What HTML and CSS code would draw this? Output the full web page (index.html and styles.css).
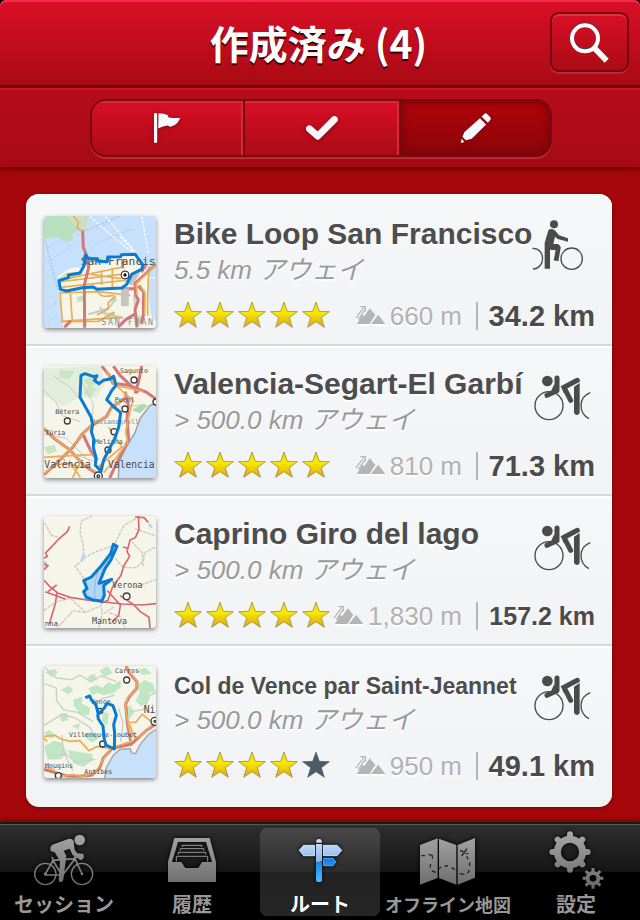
FILE: index.html
```html
<!DOCTYPE html>
<html lang="ja">
<head>
<meta charset="utf-8">
<meta name="viewport" content="width=device-width, initial-scale=1">
<title>作成済み (4)</title>
<link rel="stylesheet" href="styles.css">
</head>
<body>
<svg class="defs" aria-hidden="true">
  <defs>
    <linearGradient id="gold" x1="0" y1="0" x2="0" y2="1"><stop offset="0" stop-color="#eadb00"/><stop offset=".4" stop-color="#f8ea02"/><stop offset="1" stop-color="#dfa512"/></linearGradient>
    <linearGradient id="steel" gradientUnits="userSpaceOnUse" x1="0" y1="50" x2="0" y2="215"><stop offset="0" stop-color="#a9a9a9"/><stop offset="1" stop-color="#6b6b6b"/></linearGradient>
    <linearGradient id="steel-low" gradientUnits="userSpaceOnUse" x1="0" y1="150" x2="0" y2="330"><stop offset="0" stop-color="#a9a9a9"/><stop offset="1" stop-color="#666"/></linearGradient>
    <linearGradient id="sky" x1="0" y1="0" x2="0" y2="1"><stop offset="0" stop-color="#d5e3f8"/><stop offset="1" stop-color="#84b0ec"/></linearGradient>
    <linearGradient id="azure" x1="0" y1="0" x2="0" y2="1"><stop offset="0" stop-color="#1478e8"/><stop offset="1" stop-color="#3fc0fc"/></linearGradient>
    <symbol id="star" viewBox="0 0 84 84"><path d="M42 3 52 31 82 32 58 50 67 79 42 62 17 79 26 50 2 32 32 31Z"/></symbol>
    <symbol id="peaks" viewBox="102 358 94 62">
      <path d="M107 417 123 388 129 393 147 368 160 384 164 389 146 417Z"/>
      <path d="M150 417 173 388 195 417Z"/>
      <path d="M104 399 128 366M111 403 131 374M117 363H133V378" fill="none" stroke="currentColor" stroke-width="4"/>
    </symbol>
    <symbol id="racer" viewBox="636 69 180 168">
      <circle cx="687" cy="182" r="42" fill="none" stroke="currentColor" stroke-width="4"/>
      <path d="M811 143C776 156 773 202 807 221" fill="none" stroke="currentColor" stroke-width="4"/>
      <circle cx="682" cy="108" r="16"/>
      <path d="M711 99V137L681 151" fill="none" stroke="currentColor" stroke-width="15" stroke-linecap="round" stroke-linejoin="round"/>
      <path d="M703 116 694 137 708 140Z"/>
      <path d="M772 106 732 127 752 166" fill="none" stroke="currentColor" stroke-width="15" stroke-linecap="round"/>
      <path d="M724 124 734 120 740 140 731 144Z"/>
      <path d="M762 125 779 114V202Q778 210 770 210 762 209 762 202Z"/>
    </symbol>
  </defs>
</svg>

<header class="topbar">
  <h1 class="topbar-title">作成済み (4)</h1>
  <button class="search" type="button" aria-label="検索">
    <svg viewBox="747 63 123 129" aria-hidden="true"><path d="m823 144 37 38" stroke="#fff" stroke-width="17"/><circle cx="795" cy="112" r="39" fill="none" stroke="#3e3e50" stroke-width="12"/><circle cx="795" cy="115" r="39" fill="none" stroke="#fff" stroke-width="12"/></svg>
  </button>
</header>

<div class="filterbar">
  <div class="segments" role="group">
    <button class="segment" type="button" aria-label="フラグ">
      <svg viewBox="465 342 90 99" aria-hidden="true"><path d="M468 349Q468 345 473 345 478 345 478 349V434Q478 438 473 438 468 438 468 434ZM482 346Q500 346 512 352V358Q530 362 549 360 544 377 529 384 518 391 511 384 496 385 481 393Z"/></svg>
    </button>
    <button class="segment" type="button" aria-label="完了">
      <svg viewBox="0 0 99 81" aria-hidden="true"><path d="m13 43 24 21L85 16" fill="none" stroke="currentColor" stroke-width="20" stroke-linejoin="round" stroke-linecap="round"/></svg>
    </button>
    <button class="segment segment-on" type="button" aria-label="作成済み" aria-pressed="true">
      <svg viewBox="426 343 93 93" aria-hidden="true"><path d="M497 348Q500 345 504 348L514 358Q517 362 514 366L507 374 489 357ZM484 361 502 379 460 421 443 425 433 415 439 401ZM431 421 439 430 428 433Z"/></svg>
    </button>
  </div>
</div>

<main class="content">
  <ul class="routes">
    <li class="route">
      <svg class="map" viewBox="72 93 336 336" role="img" aria-label="Bike Loop San Francisco">
        <path class="water" d="M72 93H408V429H72Z"/>
        <path d="M72 150 130 100M80 190 180 130M72 240 170 170M220 180 340 130M230 130 300 95M72 290 110 260M76 380 110 350M72 420 112 390" stroke="#b5d3f3" stroke-width="3"/>
        <path d="M72 93H203L199 127 184 141 173 128 157 146 158 166 142 172 112 156 72 162Z" fill="#b8dfbe"/>
        <path d="M140 93H200L199 127 181 139Z" fill="#ccdfc4"/>
        <path class="land" d="M115 273 150 250 184 246 197 208 218 226 260 214 348 207 370 245 386 267V330L393 390 408 410V429H130L116 320Z"/>
        <path d="M114 282 137 264 178 260 185 274 140 283ZM214 216 263 217V236H218ZM170 336 191 330 191 349 173 352ZM250 390 280 379 287 399 260 405ZM272 344 290 337V351H275ZM350 392 366 391V411H351Z" fill="#c2e6bd"/>
        <path d="M240 366C248 394 292 350 285 331M205 388 258 373M246 382 310 399M343 330 347 412" fill="none" stroke="#ccc9c2" stroke-width="6"/>
        <path d="M75 165 113 313M190 139 298 93" fill="none" stroke="#9caabc" stroke-width="2" stroke-dasharray="6 4"/>
        <path d="M210 95 286 161 360 220M257 94 351 208M366 94 385 210M300 154 365 224M384 277 408 280" fill="none" stroke="#fff" stroke-width="4" stroke-dasharray="8 5"/>
        <path class="road-o" d="M115 291 302 268M120 307 325 285M140 281 308 246M213 268 303 281M245 256V300M277 248V308M120 321 127 410 235 409 285 382M119 324 234 320 331 331M151 326 157 409M232 315C242 352 288 320 281 338L264 354 266 371 231 390M123 409 305 397M387 245 383 326V392"/>
        <path class="road-r" d="M188 136 190 188 200 211 206 247 193 300 194 428M206 219 235 223M308 223V250M133 427 153 407M309 311 345 311M294 427 317 404 345 387M364 262 377 240"/>
        <path class="road-r" d="M408 238 345 295 347 330 355 345 345 374 351 427M354 303 371 320 370 392 363 416"/>
        <path class="road-o" d="M160 93 175 111 172 129 187 140M405 242 349 296 351 329M360 300 375 325 374 387"/>
        <path d="M311 288 365 256 336 302ZM303 309 327 311 326 364 303 364Z" fill="#c5c3c4"/>
        <text class="place" x="182" y="241" font-size="34">San Francis</text>
        <text class="place faint" x="244" y="420" font-size="25" letter-spacing="5">SAN FRAN</text>
        <path class="track" d="M196 210 192 242 180 264 145 270 146 278 117 287 121 313 140 318 187 308 220 306 230 313 306 309 320 298 335 268 366 252 368 239 359 227 346 208 304 209 302 215 263 216 262 230 232 228 232 221 206 222 196 210Z"/>
        <circle cx="315" cy="270" r="12" fill="#fff" stroke="#222" stroke-width="3"/><circle cx="315" cy="270" r="5" fill="#111"/>
      </svg>
      <div class="info">
        <div class="heading"><h2 class="name">Bike Loop San Francisco</h2>
          <svg class="bike" viewBox="636 99 180 168" aria-hidden="true"><circle cx="755" cy="221" r="32" fill="none" stroke="currentColor" stroke-width="4"/><path d="M637 190C678 188 677 251 639 252" fill="none" stroke="currentColor" stroke-width="4"/><circle cx="702" cy="118" r="12"/><path d="M685 136Q690 130 699 133L706 137 717 151 744 160V170L713 162 705 155 700 177 713 177Q723 181 722 189L715 229 701 226 707 196 690 194V251H674V173Z"/></svg></div>
        <p class="away">5.5 km アウェイ</p>
        <div class="stats">
          <div class="stars" role="img" aria-label="5 / 5"><svg><use href="#star"/></svg><svg><use href="#star"/></svg><svg><use href="#star"/></svg><svg><use href="#star"/></svg><svg><use href="#star"/></svg></div>
          <svg class="peaks" aria-hidden="true"><use href="#peaks"/></svg><span class="climb">660 m</span>
          <strong class="distance">34.2 km</strong>
        </div>
      </div>
    </li>
    <li class="route">
      <svg class="map" viewBox="72 63 336 336" role="img" aria-label="Valencia-Segart-El Garbí">
        <path class="land" d="M72 63H408V399H72Z"/>
        <path d="M72 70 240 63 255 110 230 160 180 155 130 185 72 150Z" fill="#e2eedb"/>
        <path d="M118 74 165 78 145 104 118 96ZM205 120 230 133 212 158 190 145ZM72 305 105 299 110 319 83 329ZM190 105 222 91 232 115 205 127Z" fill="#c8e6c6"/>
        <path class="water" d="M408 177 391 180 360 221 345 263 314 315 297 351 295 399H408Z"/>
        <path d="M408 177 391 180 360 221 345 263 314 315 297 351 295 399" fill="none" stroke="#999" stroke-width="4"/>
        <path d="M335 195 370 176 384 182 359 205Z" fill="#a9d9b5"/>
        <path d="M72 137 108 171 127 212 180 230M177 96 220 176 214 246M280 170 307 186 369 180M72 267 140 280 212 353M166 330 221 348M100 92 150 127 177 160" fill="none" stroke="#cbc9c0" stroke-width="3"/>
        <path class="road-r" d="M245 63 267 90 279 115 325 121 379 141 408 162M280 63 301 92 355 143M345 145 357 105 365 63M315 140 325 180 321 221 326 283 290 354 269 399"/>
        <path class="road-r" d="M320 156 274 188 260 214 214 242 187 267 158 307 110 354 72 389M72 251 105 282 150 315 191 360 240 392M190 270 211 315 232 347"/>
        <path class="road-o" d="M287 120 320 150 338 165 326 219 317 260 323 291 288 339 251 383M258 76 284 121 370 139M72 248 112 286 154 320 188 356 237 386M318 154 276 190 261 213 216 239 185 271 151 312 110 351M72 386 100 363 138 354 188 366M72 337 150 332 218 329M147 348 181 397M182 349 158 398M235 365 306 306 266 247"/>
        <g class="towns"><circle cx="342" cy="105" r="9"/><circle cx="315" cy="192" r="9"/><circle cx="142" cy="228" r="9"/><circle cx="282" cy="260" r="9"/><circle cx="264" cy="315" r="9"/><circle cx="408" cy="171" r="9"/><circle cx="235" cy="393" r="12"/><circle cx="235" cy="394" r="4"/></g>
        <g font-size="20"><text class="place" x="300" y="83">Sagunto</text><text class="place" x="284" y="171">Puçol</text><text class="place" x="106" y="206">Bétera</text><text class="place faint" x="213" y="237">Massamagrell</text><text class="place" x="76" y="269">Túria</text><text class="place" x="224" y="296">Meliana</text></g>
        <text class="place" x="73" y="370" font-size="29">València</text><text class="place" x="236" y="370" font-size="29">/</text><text class="place" x="264" y="370" font-size="29">Valencia</text>
        <path class="track" d="M243 379 226 361 228 337 220 308 221 282 214 260 218 240 213 216 180 157 183 91 195 86 221 95 231 92 223 106 237 116 250 106 270 102 281 94 288 121 275 137 260 164 279 183 302 203 296 247 285 279 264 319 251 345Z"/>
      </svg>
      <div class="info">
        <div class="heading"><h2 class="name">Valencia-Segart-El Garbí</h2><svg class="bike" aria-hidden="true"><use href="#racer"/></svg></div>
        <p class="away">&gt; 500.0 km アウェイ</p>
        <div class="stats">
          <div class="stars" role="img" aria-label="5 / 5"><svg><use href="#star"/></svg><svg><use href="#star"/></svg><svg><use href="#star"/></svg><svg><use href="#star"/></svg><svg><use href="#star"/></svg></div>
          <svg class="peaks" aria-hidden="true"><use href="#peaks"/></svg><span class="climb">810 m</span>
          <strong class="distance">71.3 km</strong>
        </div>
      </div>
    </li>
    <li class="route">
      <svg class="map" viewBox="72 63 336 336" role="img" aria-label="Caprino Giro del lago">
        <path class="land" d="M72 63H408V399H72Z"/>
        <path d="M217 63 185 77 180 108 190 152 192 193 165 213 193 253M192 188 232 169 282 151 312 91 348 71M286 190 309 217 350 218 371 196 373 174 408 155M345 101 408 123M369 214 367 173 336 141M75 84 93 120 120 129M72 347 105 322 151 310 197 352 244 332 246 359 236 399M281 336 253 355M195 352 160 347 111 399M269 354 300 365 315 399M340 278 408 254" fill="none" stroke="#c9c9c2" stroke-width="4" stroke-dasharray="10 3"/>
        <path d="M185 199 192 176M76 198 78 217M387 87 396 98" stroke="#b8dbef" stroke-width="9"/>
        <path class="road-thin" d="M149 94 142 110 116 132 98 152 77 174 82 184 72 190M72 206 84 212 72 224M72 256 89 274 113 294 151 307 220 318 308 327 366 330 408 326M355 63 357 103 346 128 330 135 321 170 329 184 311 213 303 241 278 275 264 316 243 325M345 66 372 68 385 82M262 287 301 330M300 302 341 329 361 350 387 367 390 399M302 326 296 361 275 383M111 294 106 326 88 387M84 290 110 270M76 290 137 313M309 156 325 160"/>
        <path d="M285 147 294 154 276 191 256 221 235 267 273 254 252 273 253 301 245 319 218 315 198 307 191 292 200 281 196 260 214 244 240 216 272 177Z" fill="#b4d6f7"/>
        <path d="M270 191 233 228 225 264 224 309" fill="none" stroke="#8cb9df" stroke-width="3"/>
        <circle cx="320" cy="304" r="10" class="town"/>
        <g font-size="25"><text class="place" x="277" y="280">Verona</text><text class="place" x="216" y="388">Mantova</text></g>
        <text class="place" x="74" y="393" font-size="22">nna</text>
        <path class="track" d="M280 148 291 154 272 196 255 221 237 265 275 253 251 272 253 301 245 319 217 314 198 306 191 290 201 280 191 257 214 246 240 217 272 176Z"/>
      </svg>
      <div class="info">
        <div class="heading"><h2 class="name">Caprino Giro del lago</h2><svg class="bike" aria-hidden="true"><use href="#racer"/></svg></div>
        <p class="away">&gt; 500.0 km アウェイ</p>
        <div class="stats">
          <div class="stars" role="img" aria-label="5 / 5"><svg><use href="#star"/></svg><svg><use href="#star"/></svg><svg><use href="#star"/></svg><svg><use href="#star"/></svg><svg><use href="#star"/></svg></div>
          <svg class="peaks" aria-hidden="true"><use href="#peaks"/></svg><span class="climb">1,830 m</span>
          <strong class="distance distance-long">157.2 km</strong>
        </div>
      </div>
    </li>
    <li class="route">
      <svg class="map" viewBox="72 63 336 336" role="img" aria-label="Col de Vence par Saint-Jeannet">
        <path class="land" d="M72 63H408V399H72Z"/>
        <path d="M75 82 103 71 114 83 97 96ZM122 134 147 122 160 137 145 148ZM161 163 187 155 186 176 210 189 208 211 181 207 161 182ZM201 95 222 86 232 103 210 112ZM239 78 262 63 278 84 253 96ZM204 130 229 119 247 129 265 111 280 119 301 106 303 127 280 144 252 151 233 143 216 151ZM349 77 375 69 395 85 370 91ZM352 120 375 105 399 116 408 145 389 140 384 171 364 184 346 168 359 143ZM314 194 332 180 342 201 330 223ZM118 208 140 203 145 225 125 231ZM72 304 102 287 126 294 141 324 122 343 83 344ZM142 314 182 322 217 327 219 346 190 366 160 354ZM185 267 217 261 238 279 215 293ZM72 264 88 255 108 271 92 281ZM248 201 267 205 261 243 247 228ZM155 243 180 235 175 253Z" fill="#c0e7c4"/>
        <path d="M72 65 110 99 155 104 180 90 213 111 243 93 288 109M72 116 109 129 110 167 131 195 174 202 219 229M72 241 126 208 166 219 210 247 227 280M126 270 129 320 168 352 226 343M222 180 244 162 284 150M332 200 371 193 390 150 408 144M296 190 309 233 302 290M87 332 134 328 159 377" fill="none" stroke="#c9cfc9" stroke-width="4"/>
        <path class="water" d="M408 253 385 269 360 299 347 326 335 324 331 311 300 313 280 331 258 370 254 399H408Z"/>
        <path d="M408 253 385 269 360 299 347 326 335 324 331 311 300 313 280 331 258 370 254 399" fill="none" stroke="#a9afb3" stroke-width="5"/>
        <path class="road-r" d="M318 63 326 81 351 110 350 130 328 155 317 177 322 235 332 288M72 373 103 382 141 393 176 394 214 391 238 371 250 339 278 309 333 298 381 255 403 240 408 230"/>
        <path class="road-o" d="M320 63 329 82 353 112 347 134 323 158 316 186 325 240 335 289 282 306M72 274 105 271 123 282 150 289 179 287 207 317 230 305 273 310M119 394 160 389 190 395 229 379 247 346 273 312M325 232 347 232 367 208 390 226 408 239M329 238 344 279 361 273 402 235M81 290 73 280M74 366 105 375"/>
        <g class="towns"><circle cx="320" cy="105" r="9"/><circle cx="248" cy="297" r="9"/><circle cx="115" cy="392" r="9"/><circle cx="240" cy="198" r="8"/><circle cx="405" cy="229" r="12"/><circle cx="405" cy="229" r="3"/></g>
        <g font-size="20"><text class="place" x="285" y="83">Carros</text><text class="place" x="212" y="176">Vence</text><text class="place" x="147" y="275">Villeneuve-Loubet</text><text class="place" x="75" y="370">Mougins</text><text class="place" x="193" y="387">Antibes</text></g>
        <text class="place" x="371" y="203" font-size="29">Ni</text>
        <path class="track" d="M196 158 209 153 214 164 228 180 235 207 253 189 261 175 279 182 289 211 281 239 284 265 283 312 258 300 253 284 249 243 235 222 233 207"/>
      </svg>
      <div class="info">
        <div class="heading"><h2 class="name name-long">Col de Vence par Saint-Jeannet</h2><svg class="bike" aria-hidden="true"><use href="#racer"/></svg></div>
        <p class="away">&gt; 500.0 km アウェイ</p>
        <div class="stats">
          <div class="stars" role="img" aria-label="4 / 5"><svg><use href="#star"/></svg><svg><use href="#star"/></svg><svg><use href="#star"/></svg><svg><use href="#star"/></svg><svg class="star-off"><use href="#star"/></svg></div>
          <svg class="peaks" aria-hidden="true"><use href="#peaks"/></svg><span class="climb">950 m</span>
          <strong class="distance">49.1 km</strong>
        </div>
      </div>
    </li>
  </ul>
</main>

<nav class="tabbar">
  <a class="tab" href="#session">
    <svg viewBox="96 45 192 180" aria-hidden="true"><g fill="none" stroke="url(#steel)" stroke-width="4"><circle cx="136" cy="177" r="32"/><circle cx="246" cy="177" r="32"/><path d="M136 177 159 136 185 180H136M159 136 225 131 246 177M225 131 188 180M156 126 164 145M224 138V126L236 128" stroke-width="5"/></g><g fill="url(#steel)"><circle cx="239" cy="75" r="16"/><circle cx="136" cy="177" r="5"/><circle cx="246" cy="177" r="4"/><path d="M157 89 207 71Q217 70 221 78L224 105 232 115 249 116Q255 124 248 133L240 136 233 127 218 121 209 101 191 107 199 122 190 194Q187 203 178 200L176 193 180 139 164 112 152 108Q149 95 157 89Z"/></g></svg>
    <span class="tab-label">セッション</span>
  </a>
  <a class="tab" href="#history">
    <svg viewBox="480 45 192 180" aria-hidden="true"><path fill="url(#steel)" fill-rule="evenodd" d="M523 69H629L648 140V201H504V140ZM534 81 516 141H544L556 159H595L606 141H636L618 81Z"/><g fill="none" stroke="url(#steel)" stroke-width="3"><path d="M547 96V91H605V96M541 107V101H611V107M535 119V112H617V119M529 140V124H623V140"/></g></svg>
    <span class="tab-label">履歴</span>
  </a>
  <a class="tab tab-on" href="#routes" aria-current="page">
    <svg viewBox="114 45 192 180" aria-hidden="true"><path fill="url(#sky)" d="M199 79Q199 72 207 72 215 72 215 79V83H199ZM147 106 161 90H195V123H161ZM219 90H261L276 106 261 123H219ZM198 87H216V139L198 143Z"/><path fill="url(#azure)" d="M198 143 216 139V195Q216 201 207 201 198 201 198 195ZM220 129H249L258 141 249 153H220Z"/><path d="M148 106 161 91H194V122H161ZM220 91H261L275 106 261 122H220Z" fill="none" stroke="#bcdcf8" stroke-width="3"/><path d="M221 130H249L257 141 249 152H221Z" fill="none" stroke="#46a7f8" stroke-width="3"/></svg>
    <span class="tab-label">ルート</span>
  </a>
  <a class="tab" href="#offline">
    <svg viewBox="498 45 192 180" aria-hidden="true"><path fill="url(#steel)" d="M510 90 563 70V189L510 209ZM567 71 619 90V209L567 189ZM623 90 675 69V188L623 209Z"/><path d="M514 122H525M535 119 546 120 548 131M542 147 540 158M546 168 557 172M567 160 574 156M584 153H594M605 158 614 164M628 176 643 178M653 175 658 165M659 153V142M654 133 650 124M630 106 655 117M651 101 635 123" fill="none" stroke="#242424" stroke-width="4"/></svg>
    <span class="tab-label tab-label-long">オフライン地図</span>
  </a>
  <a class="tab" href="#settings">
    <svg viewBox="102 150 192 180" aria-hidden="true"><g fill="none" stroke="url(#steel-low)"><circle cx="180" cy="216" r="38" stroke-width="21"/><g stroke-width="18" stroke-linecap="round"><path d="M180 174V163M180 258V269M138 216H127M222 216H233M150 186 143 179M210 186 217 179M150 246 143 253M210 246 217 253"/></g><circle cx="249" cy="295" r="16" stroke-width="12"/><path d="M249 276V264M249 314V326M230 295H218M268 295H280M236 282 227 273M262 282 271 273M236 308 227 317M262 308 271 317" stroke-width="9"/></g></svg>
    <span class="tab-label">設定</span>
  </a>
</nav>
</body>
</html>
```
FILE: styles.css
```css
* {
  box-sizing: border-box;
}

html {
  background: #000;
}

body {
  display: flex;
  flex-direction: column;
  min-height: 100vh;
  margin: 0;
  font-family: "Liberation Sans", "Noto Sans CJK JP", sans-serif;
}

button {
  padding: 0;
  font: inherit;
  cursor: pointer;
}

svg {
  display: block;
  flex: none;
}

.defs {
  position: absolute;
  width: 0;
  height: 0;
}

/* Title bar */

.topbar {
  display: grid;
  grid-template-columns: 1fr auto 1fr;
  align-items: start;
  height: 88px;
  padding: 12px 11px 0 8px;
  border-radius: 6px 6px 0 0;
  background: linear-gradient(#d90f26, #a80a14);
  box-shadow: inset 0 2px #f52d4c, inset 0 -3px #7f080e;
}

.topbar-title {
  grid-column: 2;
  margin: 0;
  color: #fff;
  font: bold 39px/60px "Noto Sans CJK JP", sans-serif;
  text-shadow: 0 2px 1px #300;
}

.search {
  display: grid;
  place-items: center;
  justify-self: end;
  width: 79px;
  height: 60px;
  border: 2px solid #780810;
  border-radius: 9px;
  background: linear-gradient(#d90f26, #ab0b16);
  box-shadow: inset 0 2px #dd3344, 0 2px #bd2933;
}

.search svg {
  width: 41px;
  height: 43px;
}

/* Filter bar */

.filterbar {
  position: relative;
  height: 79px;
  padding: 11px 88px 0 90px;
  background: linear-gradient(#b60d1b, #a60915);
  box-shadow: inset 0 2px #d3112a, 0 1px 5px 1px #5e0004;
}

.segments {
  display: grid;
  grid-template-columns: 153fr 156fr 149fr;
  height: 58px;
  overflow: hidden;
  border: 2px solid #7c0810;
  border-radius: 16px;
  background: #8c060b;
  box-shadow: 0 2px #b92a34;
}

.segment {
  display: grid;
  place-items: center;
  border: 0;
  border-right: 2px solid #7c0810;
  background: linear-gradient(#d90f26, #ab0b16);
  box-shadow: inset -2px 2px #d5293a;
  color: #f5f8fc;
}

.segment svg {
  height: 32px;
  fill: currentColor;
  filter: drop-shadow(0 1px 2px #80060c);
}

.segment:nth-child(2) svg {
  height: 28px;
}

.segment-on {
  border: 0;
  border-radius: 0 14px 14px 0;
  background: linear-gradient(#b2020b, #890609);
  box-shadow: inset 0 0 6px 2px #76060a;
}

/* Route list */

.content {
  flex: 1;
  padding: 27px 28px 15px 26px;
  background: #a6070b;
}

.routes {
  margin: 0;
  padding: 2px 0 11px;
  overflow: hidden;
  border-radius: 13px;
  background: linear-gradient(#f6f7f9 50%, #f0f2f4 50%);
  box-shadow: 0 1px 4px #6c0508, inset 0 1px #fff;
  list-style: none;
}

.route {
  display: grid;
  grid-template-columns: 112px 1fr;
  gap: 18px;
  height: 150px;
  padding: 20px 17px 0 18px;
  border-bottom: 2px solid #d7d8da;
  background: linear-gradient(#f6f7f9, #f1f3f5);
}

.route + .route {
  box-shadow: inset 0 2px #fff;
}

.route:last-child {
  border-bottom: 0;
}

.info {
  min-width: 0;
}

.heading {
  display: flex;
  justify-content: space-between;
  height: 36px;
}

.name {
  margin: 0;
  color: #4d4d4d;
  font-size: 30px;
  line-height: 36px;
  text-shadow: 0 2px #fff;
  white-space: nowrap;
}

.name-long {
  font-size: 23px;
  line-height: 40px;
}

.bike {
  width: 60px;
  height: 56px;
  margin: 2px 3px 0 0;
  color: #4b4b49;
  fill: currentColor;
}

.away {
  margin: 0;
  color: #9a9a9a;
  font-size: 26px;
  font-style: italic;
  line-height: 36px;
  text-shadow: 0 2px #fff;
}

.stats {
  display: flex;
  align-items: flex-end;
  height: 30px;
  margin-top: 12px;
}

.stars {
  display: flex;
  gap: 4px;
  margin-right: auto;
  padding-bottom: 1px;
}

.stars svg {
  width: 28px;
  height: 28px;
  fill: url(#gold);
  stroke: #8b7b3b;
  stroke-width: 2px;
}

.stars .star-off {
  fill: #4c5c66;
  stroke: #4c5c66;
}

.peaks {
  width: 31px;
  height: 20px;
  margin: 0 4px 5px 0;
  color: #b5b5b5;
  fill: currentColor;
  filter: drop-shadow(0 2px #fff);
}

.climb {
  color: #b2b2b2;
  font-size: 26px;
  line-height: 28px;
  text-shadow: 0 2px #fff;
}

.distance {
  width: 119px;
  margin-left: 14px;
  border-left: 2px solid #b5b5b5;
  color: #4b4b4b;
  font-size: 29px;
  line-height: 28px;
  text-align: right;
  text-shadow: 0 2px #fff;
}

.distance-long {
  font-size: 25px;
}

/* Map thumbnails */

.map {
  width: 112px;
  height: 112px;
  border-radius: 4px;
  box-shadow: 0 2px 4px #8a8a8a;
}

.water {
  fill: #c7e0fb;
}

.land {
  fill: #f5f5e9;
}

.road-o {
  fill: none;
  stroke: #e8ae55;
  stroke-width: 5px;
}

.road-r {
  fill: none;
  stroke: #d4777d;
  stroke-width: 9px;
}

.road-thin {
  fill: none;
  stroke: #d5696f;
  stroke-width: 5px;
}

.town,
.towns circle {
  fill: #fff;
  stroke: #3d3d3d;
  stroke-width: 4px;
}

.place {
  fill: #4b4b4b;
  font-family: "DejaVu Sans Mono", monospace;
}

.faint {
  fill: #8b8b8b;
}

.track {
  fill: none;
  stroke: #087cd2;
  stroke-width: 9px;
  stroke-linejoin: round;
}

/* Tab bar */

.tabbar {
  position: relative;
  display: grid;
  grid-template-columns: repeat(5, minmax(0, 1fr));
  height: 98px;
  padding-top: 6px;
  background: linear-gradient(#303030, #151515 50px, #000 50px);
  box-shadow: inset 0 2px #191919, inset 0 3px #575757, 0 -2px 4px #700407;
}

.tab {
  display: flex;
  flex-direction: column;
  align-items: center;
  height: 88px;
  margin: 0 4px;
  padding-top: 2px;
  border-radius: 7px;
  color: #989898;
  text-decoration: none;
}

.tab svg {
  width: 64px;
  height: 60px;
  filter: drop-shadow(0 0 2px #000);
}

.tab-on {
  background: linear-gradient(#484848, #2c2c2c 44px, #222 44px, #262626);
  color: #fff;
}

.tab-label {
  font: bold 20px/28px "Noto Sans CJK JP", sans-serif;
  white-space: nowrap;
}

.tab-label-long {
  font-size: 18px;
}
```
